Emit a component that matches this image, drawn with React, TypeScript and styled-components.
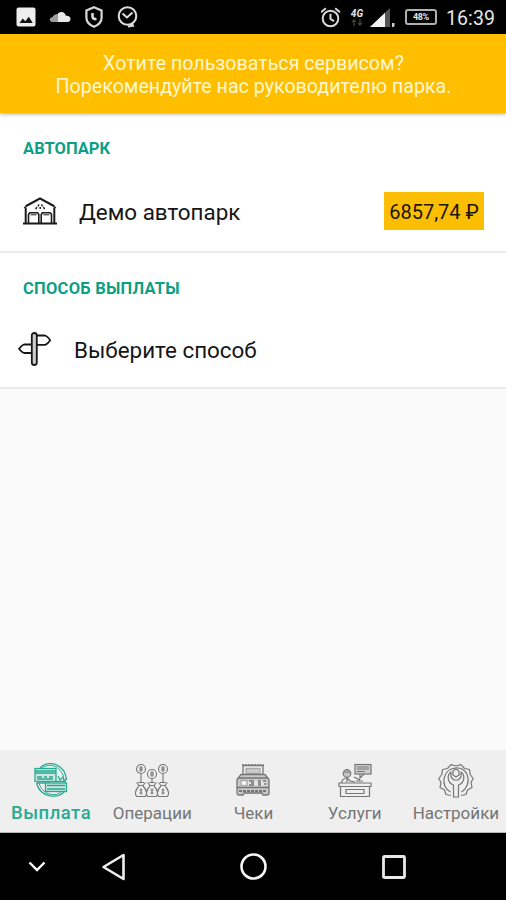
import React from "react";
import styled, { createGlobalStyle } from "styled-components";

const GlobalStyle = createGlobalStyle`
  * { box-sizing: border-box; }
  body { margin: 0; background: #fafafa; font-family: Roboto, "Noto Sans", sans-serif; }
  svg { display: block; flex: none; }
`;

const Screen = styled.div`
  width: 506px;
  height: 900px;
  display: flex;
  flex-direction: column;
  overflow: hidden;
  background: #fafafa;
`;

const StatusBar = styled.header`
  height: 34px;
  flex: none;
  display: flex;
  align-items: center;
  justify-content: space-between;
  padding: 0 11px 0 16px;
  background: #000;
  color: #e6e6e6;
`;

const StatusGroup = styled.div<{ $gap: number }>`
  display: flex;
  align-items: center;
  gap: ${(p) => p.$gap}px;
`;

const Clock = styled.span`
  font-size: 19.5px;
  line-height: 24px;
  letter-spacing: 0.1px;
  margin: 4px 0 0 2px;
`;

const NetworkLabel = styled.span`
  font-size: 10px;
  line-height: 10px;
  font-weight: 700;
  font-style: italic;
`;

const Network = styled.div`
  display: flex;
  flex-direction: column;
  align-items: center;
  width: 16px;
  margin-right: -2px;
`;

const Battery = styled.div`
  width: 32px;
  height: 16px;
  margin-left: 2px;
  border: 2px solid #b0b0b0;
  border-radius: 3px;
  font-size: 9px;
  line-height: 12px;
  font-weight: 700;
  text-align: center;
  letter-spacing: -0.3px;
`;

const Banner = styled.div`
  position: relative;
  height: 79px;
  flex: none;
  padding-top: 18px;
  background: #ffbf00;
  color: #fff6d2;
  text-align: center;
  font-size: 19.65px;
  line-height: 23px;
  box-shadow: 0 1px 4px rgba(0, 0, 0, 0.35);
`;

const BannerLine = styled.div`
  padding-left: 1px;
`;

const Section = styled.section<{ $height: number }>`
  height: ${(p) => p.$height}px;
  flex: none;
  background: #fff;
  border-bottom: 2px solid #ececec;
`;

const SectionTitle = styled.h2<{ $spacing: number }>`
  margin: 0;
  padding: 25px 0 0 23px;
  font-size: 16.5px;
  line-height: 21px;
  font-weight: 700;
  letter-spacing: ${(p) => p.$spacing}px;
  color: #0d9f85;
`;

const Row = styled.div<{ $left: number; $top: number }>`
  display: flex;
  align-items: center;
  height: 38px;
  margin-top: ${(p) => p.$top}px;
  padding: 0 22px 0 ${(p) => p.$left}px;
  gap: 22px;
`;

const RowLabel = styled.span`
  flex: 1;
  padding-top: 1px;
  font-size: 22.4px;
  line-height: 28px;
  color: #161616;
`;

const Amount = styled.span`
  width: 100px;
  height: 38px;
  background: #fcbe03;
  color: #1a1400;
  font-size: 20px;
  line-height: 40px;
  text-align: center;
  white-space: nowrap;
`;

const Spacer = styled.main`
  flex: 1;
`;

const TabBar = styled.nav`
  height: 83px;
  flex: none;
  display: grid;
  grid-template-columns: repeat(5, 1fr);
  background: #efefef;
  border-bottom: 1px solid #b5b5b5;
`;

const Tab = styled.div<{ $active?: boolean }>`
  display: flex;
  flex-direction: column;
  align-items: center;
  padding: 13px 0 0 1px;
  font-weight: ${(p) => (p.$active ? 500 : 400)};
  color: ${(p) => (p.$active ? "#28ab93" : "#757575")};
`;

const TabLabel = styled.span<{ $size: number; $spacing: number }>`
  margin-top: 4px;
  font-size: ${(p) => p.$size}px;
  line-height: 23px;
  letter-spacing: ${(p) => p.$spacing}px;
  white-space: nowrap;
`;

const SystemBar = styled.footer`
  height: 67px;
  flex: none;
  display: grid;
  grid-template-columns: 74px 79px 200px 82px 71px;
  align-items: center;
  justify-items: center;
  background: #000;
`;

const PictureIcon = () => (
  <svg width="20" height="20" viewBox="0 0 20 20">
    <rect x="0.5" y="0.5" width="19" height="19" rx="2" fill="#ededed" />
    <path d="M3.500 16l3.200-4.600 2.600 2.900 3.500-4.500 3.900 6.200z" fill="#111" />
  </svg>
);

const CloudIcon = () => (
  <svg width="22" height="12" viewBox="0 0 22 12">
    <path d="M9 11V2.200C13-.6 16.500 2 17 5c2.500-.6 4.500 1 4.500 3.200 0 1.600-1.200 2.800-3 2.800z" fill="#e8e8e8" />
    <path d="M9 11H3C-.2 10.500.2 6 3.300 6.300 4 4.500 6 3 9 3z" fill="#9c9c9c" />
  </svg>
);

const ShieldIcon = () => (
  <svg width="20" height="22" viewBox="0 0 20 22" fill="none" stroke="#d8d8d8" strokeWidth="2.200">
    <path d="M10 1.300l7.600 3.200v7.200c0 4-3.400 7.300-7.600 9-4.200-1.700-7.600-5-7.600-9V4.500z" />
    <path d="M8.500 7v3.500c0 1.500 1.500 2.700 4 2.800" strokeWidth="2.600" />
  </svg>
);

const BadgeClockIcon = () => (
  <svg width="21" height="22" viewBox="0 0 21 22" fill="none" stroke="#dedede" strokeWidth="2">
    <circle cx="10.500" cy="10" r="8.800" />
    <path d="M5.500 7.500l4.500 4 5.500-5" />
    <path d="M11 20.500l5-.8-1.500-3" />
  </svg>
);

const AlarmIcon = () => (
  <svg width="21" height="21" viewBox="0 0 21 21" fill="none" stroke="#dadada" strokeWidth="2">
    <circle cx="9.500" cy="11.500" r="7.800" />
    <path d="M9.500 6.800v5.200l3.500 2.200M0 5.200L4.800 1.200M19 5.200L14.200 1.200" />
  </svg>
);

const DataArrows = () => (
  <svg width="14" height="7" viewBox="0 0 14 7" fill="none" stroke="#3c3c3c" strokeWidth="1.500">
    <path d="M4 7V1M2 3l2-2 2 2M10 0v6M8 4l2 2 2-2" />
  </svg>
);

const SignalIcon = () => (
  <svg width="26" height="20" viewBox="0 0 26 20">
    <path d="M0 20L20 1v19z" fill="#555" />
    <path d="M0 20L15 5.800V20z" fill="#f4f4f4" />
    <path d="M22 16h2.500v3l-1 1H22z" fill="#ccc" />
  </svg>
);

const GarageIcon = () => (
  <svg width="34" height="28" viewBox="0 0 34 28" fill="none" stroke="#1b1b1b" strokeWidth="1.600">
    <path d="M0 26.500h34M2.700 26V10.500M31.300 26V10.500" strokeWidth="2" />
    <path d="M1 10.700L17 2l16 8.700M2.500 8.700L17 1l14.500 7.700" strokeWidth="1.300" />
    <path d="M5.500 26v-8.500l1.200-1.800h7.800l1.300 1.800V26M18.200 26v-8.500l1.200-1.800h7.800l1.300 1.800V26" />
    <path d="M7.500 17.800h6M20.300 17.800h6" strokeWidth="1" />
    <path d="M16 7.500l-1 1.800M18.500 7.500l1 1.800M13.800 10l-1 2.200M17.200 10v2M20.500 10l1 2.200" strokeWidth="1.500" />
  </svg>
);

const SignpostIcon = () => (
  <svg width="34" height="34" viewBox="0 0 34 34" fill="none" stroke="#171717" strokeWidth="1.800" strokeLinejoin="round">
    <rect x="13.800" y="1" width="5" height="32" rx="2.500" fill="#ccc" />
    <path d="M19 3.500h8q2 .5 5.200 4.700-3 4.200-5.200 4.600h-8M13.600 12.500H6Q4 13 1 16.700 4 20.500 6 21h7.600" />
  </svg>
);

const PayoutIcon = () => (
  <svg width="34" height="35" viewBox="0 0 34 35" fill="none" stroke="currentColor" strokeWidth="1.300">
    <path d="M6 5C14-3 31 0 32.500 17M31 28C23 37 6 34 2.500 20" />
    <path d="M8 5C15-.5 27 3 29.500 14M27 29C20 34.500 8 31 5 20" strokeWidth="1" />
    <rect x="1" y="5.500" width="21" height="13" fill="#cfe6e1" />
    <path d="M1 8h21M1 10h21" strokeWidth="1.500" />
    <path d="M3 14h5M10 14h3M15 14h4M3 16h16" />
    <path d="M3 20h13M24 13l2 4 3-3 1 4 3-3M22 18.500h10" />
    <rect x="11.500" y="20" width="21" height="8.500" fill="#cfe6e1" />
    <path d="M13 22.500h18M13 26h18" />
  </svg>
);

const moneyColumns = [
  { x: 6, y: 6 },
  { x: 17, y: 11 },
  { x: 28, y: 6 },
];

const OperationsIcon = () => (
  <svg width="34" height="35" viewBox="0 0 34 35" fill="none" stroke="currentColor" strokeWidth="1.100">
    {moneyColumns.map(({ x, y }) => (
      <g key={x}>
        <circle cx={x} cy={y} r="4.500" />
        <path d={`M${x} ${y - 3}v6M${x - 2} ${y - 1}h4M${x - 2} ${y + 1}h4M${x} ${y + 5}V19`} />
        <path d={`M${x - 4.5} 19.500l2.500 3h4l2.500-3M${x - 3} 19.500h6M${x - 2} 23c-4 4-4.500 9-2 10.500h8c2.500-1.500 2-6.500-2-10.500M${x} 25.500v6M${x - 1.5} 27h3M${x - 1.5} 30h3`} />
      </g>
    ))}
  </svg>
);

const ReceiptIcon = () => (
  <svg width="34" height="35" viewBox="0 0 34 35" fill="none" stroke="currentColor" strokeWidth="1.300">
    <path d="M7 11V2.500h20V11" />
    <path d="M6 2h22" strokeDasharray="2 1" />
    <path d="M10 5.500h14v5H10z" fill="#ccc" stroke="#aaa" />
    <path d="M5 11.500h24l4 5V30q0 2-2 2h-4l-1-2H8l-1 2H3q-2 0-2-2V16.500z" fill="#c9c9c9" />
    <path d="M2 15h30M1 24.500h32" />
    <path d="M12 20h18" stroke="#e2e2e2" strokeWidth="5" />
    <rect x="5" y="17.500" width="6" height="5" fill="#f5f5f5" stroke="#aaa" />
    <path d="M13 18h5M15 20h3M13 22h5M22 18h3M22 20h3M22 22h3M27 18h3M28 21h2" strokeWidth="1.500" />
    <path d="M3 28h28" strokeDasharray="3 1" strokeWidth="2" />
  </svg>
);

const ServicesIcon = () => (
  <svg width="34" height="35" viewBox="0 0 34 35" fill="none" stroke="currentColor" strokeWidth="1.200">
    <circle cx="9" cy="10.500" r="3.800" fill="#c4c4c4" />
    <path d="M6 9h6M3.500 20c0-3 2-4.500 5.500-5l3 3 5 1M9 16v3" />
    <rect x="17" y="1.500" width="16" height="9.500" fill="#d0d0d0" />
    <path d="M19 4h12M19 6h12M19 8.500h8M22 11v4l4-4M16 14l6 3M18 18h7" />
    <path d="M1 20h32v3.500H1zM2.500 23.500v10h29v-10" />
    <path d="M8 26.500h18v4H8z" />
  </svg>
);

const SettingsIcon = () => (
  <svg width="36" height="35" viewBox="0 0 36 35" fill="none" stroke="currentColor" strokeWidth="1.200" strokeLinejoin="round">
    <path d="M13 32.500l-5-1-1.500-4.500-4.500-2.500 1-5L.8 15.500l3-4 .7-5 5-1 3.500-3.800L18 3l5-1.300 3.500 3.800 5 1 .7 5 3 4-2.200 4 1 5-4.500 2.500-1.500 4.500-5 1" />
    <path d="M12.500 29C2 24 4 6 18 5s16 18 5.500 24" />
    <path d="M15.500 34V22c-6-2-7-10-2.500-13v5l3 3h4l3-3V9c4.500 3 3.500 11-2.500 13v12z" />
    <path d="M15 8l3-2 3 2v4l-3 2-3-2z" />
  </svg>
);

const tabs = [
  { label: "Выплата", size: 18.5, spacing: 0.5, icon: <PayoutIcon />, active: true },
  { label: "Операции", size: 17, spacing: 0, icon: <OperationsIcon /> },
  { label: "Чеки", size: 17, spacing: 0, icon: <ReceiptIcon /> },
  { label: "Услуги", size: 17, spacing: 0, icon: <ServicesIcon /> },
  { label: "Настройки", size: 17, spacing: 0, icon: <SettingsIcon /> },
];

export default function App() {
  return (
    <Screen>
      <GlobalStyle />
      <StatusBar>
        <StatusGroup $gap={13}>
          <PictureIcon />
          <CloudIcon />
          <ShieldIcon />
          <BadgeClockIcon />
        </StatusGroup>
        <StatusGroup $gap={7}>
          <AlarmIcon />
          <Network>
            <NetworkLabel>4G</NetworkLabel>
            <DataArrows />
          </Network>
          <SignalIcon />
          <Battery>48%</Battery>
          <Clock>16:39</Clock>
        </StatusGroup>
      </StatusBar>
      <Banner>
        <BannerLine>Хотите пользоваться сервисом?</BannerLine>
        <BannerLine>Порекомендуйте нас руководителю парка.</BannerLine>
      </Banner>
      <Section $height={140}>
        <SectionTitle $spacing={0.05}>АВТОПАРК</SectionTitle>
        <Row $left={23} $top={33}>
          <GarageIcon />
          <RowLabel>Демо автопарк</RowLabel>
          <Amount>6857,74 ₽</Amount>
        </Row>
      </Section>
      <Section $height={136}>
        <SectionTitle $spacing={0.25}>СПОСОБ ВЫПЛАТЫ</SectionTitle>
        <Row $left={18} $top={31}>
          <SignpostIcon />
          <RowLabel>Выберите способ</RowLabel>
        </Row>
      </Section>
      <Spacer />
      <TabBar>
        {tabs.map((tab) => (
          <Tab key={tab.label} $active={tab.active}>
            {tab.icon}
            <TabLabel $size={tab.size} $spacing={tab.spacing}>{tab.label}</TabLabel>
          </Tab>
        ))}
      </TabBar>
      <SystemBar>
        <svg width="18" height="12" viewBox="0 0 18 12" fill="none" stroke="#fff" strokeWidth="2.400">
          <path d="M1.500 1.500L9 9 16.500 1.500" />
        </svg>
        <svg width="26" height="28" viewBox="0 0 26 28" fill="none" stroke="#eee" strokeWidth="2.600" strokeLinejoin="round">
          <path d="M22.500 2v24L2.500 14z" />
        </svg>
        <svg width="28" height="28" viewBox="0 0 28 28" fill="none" stroke="#f6f6f6" strokeWidth="2.600">
          <circle cx="14.500" cy="13.500" r="12" />
        </svg>
        <svg width="26" height="26" viewBox="0 0 26 26" fill="none" stroke="#e8e8e8" strokeWidth="2.800">
          <rect x="2.500" y="2.500" width="21" height="21" rx="1" />
        </svg>
      </SystemBar>
    </Screen>
  );
}
